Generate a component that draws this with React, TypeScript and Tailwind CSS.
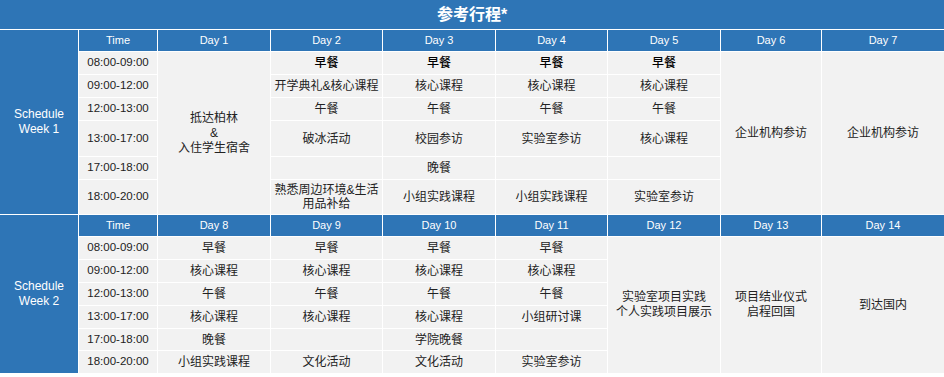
const FONT = "font-['Liberation_Sans','Noto_Sans_CJK_SC',sans-serif]";

const times = ["08:00-09:00", "09:00-12:00", "12:00-13:00", "13:00-17:00", "17:00-18:00", "18:00-20:00"];

type Week = {
  label: string;
  rows: string;
  days: string[];
  // one entry per day: either a merged text block or six slot texts
  plan: (string[] | { merged: string[] })[];
  bold?: boolean;
};

const weeks: Week[] = [
  {
    label: "Week 1",
    rows: "grid-rows-[21px_22px_22px_22px_35px_22px_34px]",
    days: ["Day 1", "Day 2", "Day 3", "Day 4", "Day 5", "Day 6", "Day 7"],
    bold: true,
    plan: [
      { merged: ["抵达柏林", "&", "入住学生宿舍"] },
      ["早餐", "开学典礼&核心课程", "午餐", "破冰活动", "", "熟悉周边环境&生活\n用品补给"],
      ["早餐", "核心课程", "午餐", "校园参访", "晚餐", "小组实践课程"],
      ["早餐", "核心课程", "午餐", "实验室参访", "", "小组实践课程"],
      ["早餐", "核心课程", "午餐", "核心课程", "", "实验室参访"],
      { merged: ["企业机构参访"] },
      { merged: ["企业机构参访"] },
    ],
  },
  {
    label: "Week 2",
    rows: "grid-rows-[21px_22px_22px_22px_22px_21px_22px]",
    days: ["Day 8", "Day 9", "Day 10", "Day 11", "Day 12", "Day 13", "Day 14"],
    plan: [
      ["早餐", "核心课程", "午餐", "核心课程", "晚餐", "小组实践课程"],
      ["早餐", "核心课程", "午餐", "核心课程", "", "文化活动"],
      ["早餐", "核心课程", "午餐", "核心课程", "学院晚餐", "文化活动"],
      ["早餐", "核心课程", "午餐", "小组研讨课", "", "实验室参访"],
      { merged: ["实验室项目实践", "个人实践项目展示"] },
      { merged: ["项目结业仪式", "启程回国"] },
      { merged: ["到达国内"] },
    ],
  },
];

function WeekGrid({ week }: { week: Week }) {
  const cells: JSX.Element[] = [];

  // header row
  cells.push(
    <div key="h-time" className="flex items-center justify-center bg-[#2e75b6] text-[11px] text-white">
      Time
    </div>
  );
  week.days.forEach((d) =>
    cells.push(
      <div key={`h-${d}`} className="flex items-center justify-center bg-[#2e75b6] text-[11px] text-white">
        {d}
      </div>
    )
  );

  // body rows; auto placement fills the gaps left by row-span cells
  times.forEach((t, r) => {
    cells.push(
      <div key={`t-${r}`} className="flex items-center justify-center bg-[#f2f2f2] text-[11.5px] text-[#222]">
        {t}
      </div>
    );
    week.plan.forEach((p, c) => {
      if (!Array.isArray(p)) {
        if (r !== 0) return;
        cells.push(
          <div
            key={`m-${c}`}
            className="row-span-6 flex flex-col items-center justify-center bg-[#f2f2f2] text-center text-[12px] leading-[15px] text-[#222]"
          >
            {p.merged.map((line, i) => (
              <span key={i}>{line}</span>
            ))}
          </div>
        );
        return;
      }
      const text = p[r];
      cells.push(
        <div
          key={`c-${c}-${r}`}
          className={`flex flex-col items-center justify-center bg-[#f2f2f2] text-center text-[12px] leading-[14px] ${
            week.bold && r === 0 ? "font-medium text-black" : "text-[#222]"
          }`}
        >
          {text.split("\n").map((line, i) => (
            <span key={i}>{line}</span>
          ))}
        </div>
      );
    });
  });

  return (
    <div className={`grid grid-cols-[78px_78px_112px_111px_112px_111px_112px_100px_122px] ${week.rows} gap-px`}>
      <div className="row-span-7 flex flex-col items-center justify-center bg-[#2e75b6] text-[12px] leading-[15px] text-white">
        <span>Schedule</span>
        <span>{week.label}</span>
      </div>
      {cells}
    </div>
  );
}

export default function App() {
  return (
    <div className={`w-[944px] h-[377px] bg-white ${FONT}`}>
      <div className="flex flex-col gap-px">
        <div className="flex h-[29px] items-center justify-center bg-[#2e75b6] text-[16px] font-bold text-white">
          参考行程*
        </div>
        {weeks.map((w) => (
          <WeekGrid key={w.label} week={w} />
        ))}
      </div>
    </div>
  );
}
